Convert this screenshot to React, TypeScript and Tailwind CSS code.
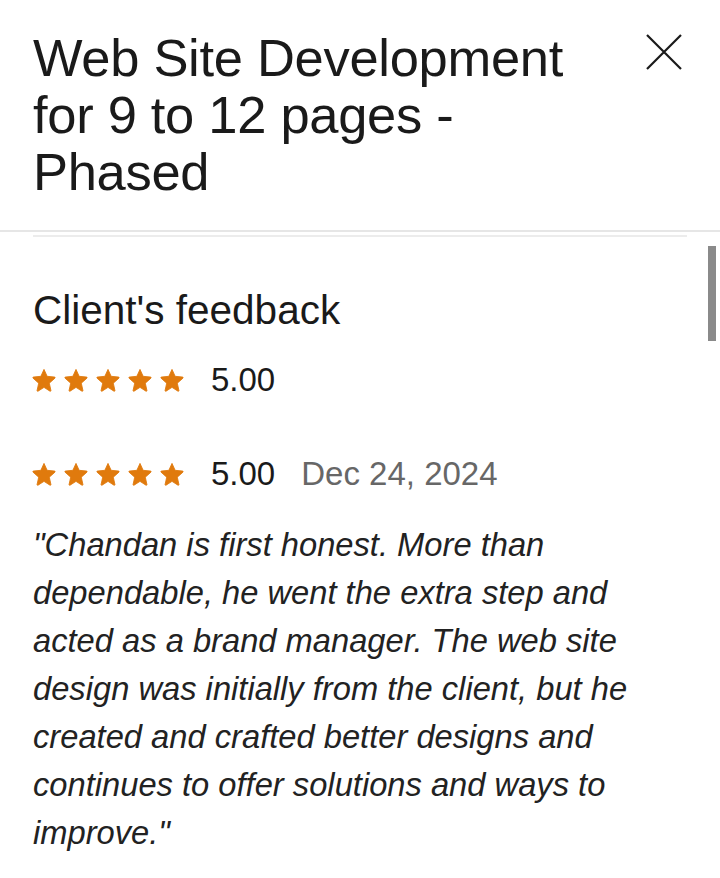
import React from "react";

const Star = () => (
  <svg viewBox="0 0 24 24" className="h-[26px] w-[26px]" fill="#e07a0d">
    <path
      d="M12 2.2l2.9 6.4 6.9.7c.5.1.7.7.3 1l-5.2 4.6 1.5 6.8c.1.5-.4.9-.9.6L12 18.8l-5.5 3.5c-.5.3-1-.1-.9-.6l1.5-6.8L1.9 10.3c-.4-.3-.2-.9.3-1l6.9-.7L12 2.2z"
      stroke="#e07a0d"
      strokeWidth="0.8"
      strokeLinejoin="round"
    />
  </svg>
);

const Stars = () => (
  <div className="-ml-[2px] flex gap-[6px]">
    {[0, 1, 2, 3, 4].map((i) => (
      <Star key={i} />
    ))}
  </div>
);

export default function App() {
  return (
    <div
      className="relative h-[878px] w-[720px] overflow-hidden bg-white text-[#1a1a1a]"
      style={{ fontFamily: '"Liberation Sans", Arial, sans-serif' }}
    >
      <header className="flex items-start justify-between border-b-2 border-[#e6e6e6] pb-[30px] pl-[33px] pr-[36px] pt-[29px]">
        <h1 className="w-[580px] text-[52.5px] leading-[57px] tracking-[-0.3px]">
          Web Site Development for 9 to 12 pages - Phased
        </h1>
        <button className="mt-[3px] p-0">
          <svg viewBox="0 0 40 40" className="h-[40px] w-[40px]" stroke="#1a1a1a" strokeWidth="2.2" fill="none">
            <path d="M3 3 L37 37 M37 3 L3 37" />
          </svg>
        </button>
      </header>

      <div className="mx-[33px] mt-[3px] h-[2px] bg-[#ececec]" />

      <main className="px-[33px] pt-[50px]">
        <h2 className="text-[40.5px] leading-[46px]">Client's feedback</h2>

        <div className="mt-[27px] flex items-center">
          <Stars />
          <span className="ml-[26px] text-[33px] leading-[40px]">5.00</span>
        </div>

        <div className="mt-[54px] flex items-center">
          <Stars />
          <span className="ml-[26px] text-[33px] leading-[40px]">5.00</span>
          <span className="ml-[26px] text-[33px] leading-[40px] text-[#676767]">Dec 24, 2024</span>
        </div>

        <p className="mt-[27px] w-[645px] text-[32.7px] italic leading-[48px] text-[#222]">
          "Chandan is first honest. More than dependable, he went the extra step and acted as a brand manager. The web
          site design was initially from the client, but he created and crafted better designs and continues to offer
          solutions and ways to improve."
        </p>
      </main>

      <div className="absolute left-[708px] top-[246px] h-[95px] w-[8px] bg-[#8a8a8a]" />
    </div>
  );
}
